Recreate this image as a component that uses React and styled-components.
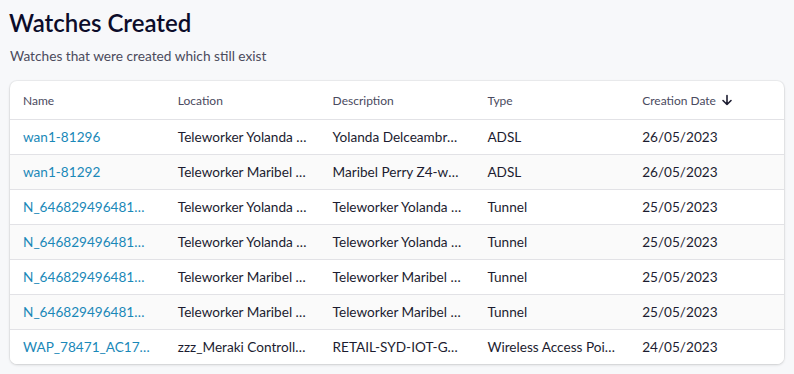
import styled, { createGlobalStyle } from "styled-components"

const GlobalStyle = createGlobalStyle`
body {
    margin: 0;
    background: #f7f8fa;
    font-family: Lato, "Noto Sans", sans-serif;
}
`
const Page = styled.div`
padding: 9px 10px 10px 10px;
`
const Title = styled.h1`
margin: 0 0 0 -1px;
font-size: 24px;
font-weight: 600;
line-height: 28px;
color: #0c0c2a;
`
const Subtitle = styled.p`
margin: 10px 0 16px 0;
font-size: 13.7px;
line-height: 18px;
color: #4b4b5c;
`
const Card = styled.div`
background: #fff;
border-radius: 7px;
box-shadow: 0 1px 3px rgb(0 0 0 / 14%), 0 0 0 1px rgb(0 0 0 / 4%);
overflow: hidden;
`
const Table = styled.table`
width: 100%;
border-collapse: collapse;
table-layout: fixed;
`
const Th = styled.th`
text-align: left;
font-weight: 400;
font-size: 12px;
color: #4a4a60;
height: 38px;
padding: 0 13px;
border-bottom: 1px solid #e2e2e6;
`
const Row = styled.tr`
background: ${p => (p.$alt ? "#fafafa" : "#fff")};
border-bottom: ${p => (p.$last ? "none" : "1px solid #e2e2e6")};
`
const Td = styled.td`
height: 34px;
padding: 0 13px;
font-size: 13.6px;
color: ${p => (p.$link ? "#1a88b8" : "#1c1c30")};
white-space: nowrap;
overflow: hidden;
text-overflow: ellipsis;
`
const SortIcon = styled.svg`
width: 12px;
height: 12px;
margin-left: 5px;
vertical-align: -1px;
`

const columns = ["Name", "Location", "Description", "Type", "Creation Date"]

const rows = [
    ["wan1-81296", "Teleworker Yolanda Delceambre", "Yolanda Delceambre Z4-wan", "ADSL", "26/05/2023"],
    ["wan1-81292", "Teleworker Maribel Perry", "Maribel Perry Z4-wan1", "ADSL", "26/05/2023"],
    ["N_646829496481145", "Teleworker Yolanda Delceambre", "Teleworker Yolanda Delceambre", "Tunnel", "25/05/2023"],
    ["N_646829496481146", "Teleworker Yolanda Delceambre", "Teleworker Yolanda Delceambre", "Tunnel", "25/05/2023"],
    ["N_646829496481147", "Teleworker Maribel Perry", "Teleworker Maribel Perry", "Tunnel", "25/05/2023"],
    ["N_646829496481148", "Teleworker Maribel Perry", "Teleworker Maribel Perry", "Tunnel", "25/05/2023"],
    ["WAP_78471_AC17C8D2", "zzz_Meraki Controller", "RETAIL-SYD-IOT-GW01", "Wireless Access Point", "24/05/2023"],
]

function App() {
    return (
        <>
            <GlobalStyle />
            <Page>
                <Title>Watches Created</Title>
                <Subtitle>Watches that were created which still exist</Subtitle>
                <Card>
                    <Table>
                        <thead>
                            <tr>
                                {columns.map((c, i) => (
                                    <Th key={c}>
                                        {c}
                                        {i === columns.length - 1 && (
                                            <SortIcon viewBox="0 0 12 12" fill="none" stroke="#1c1c30" strokeWidth="1.6" strokeLinecap="round" strokeLinejoin="round">
                                                <path d="M6 1.5v9M2 6.5l4 4 4-4" />
                                            </SortIcon>
                                        )}
                                    </Th>
                                ))}
                            </tr>
                        </thead>
                        <tbody>
                            {rows.map((r, i) => (
                                <Row key={i} $alt={i % 2 === 1} $last={i === rows.length - 1}>
                                    {r.map((v, j) => (
                                        <Td key={j} $link={j === 0}>{v}</Td>
                                    ))}
                                </Row>
                            ))}
                        </tbody>
                    </Table>
                </Card>
            </Page>
        </>
    )
}

export default App
